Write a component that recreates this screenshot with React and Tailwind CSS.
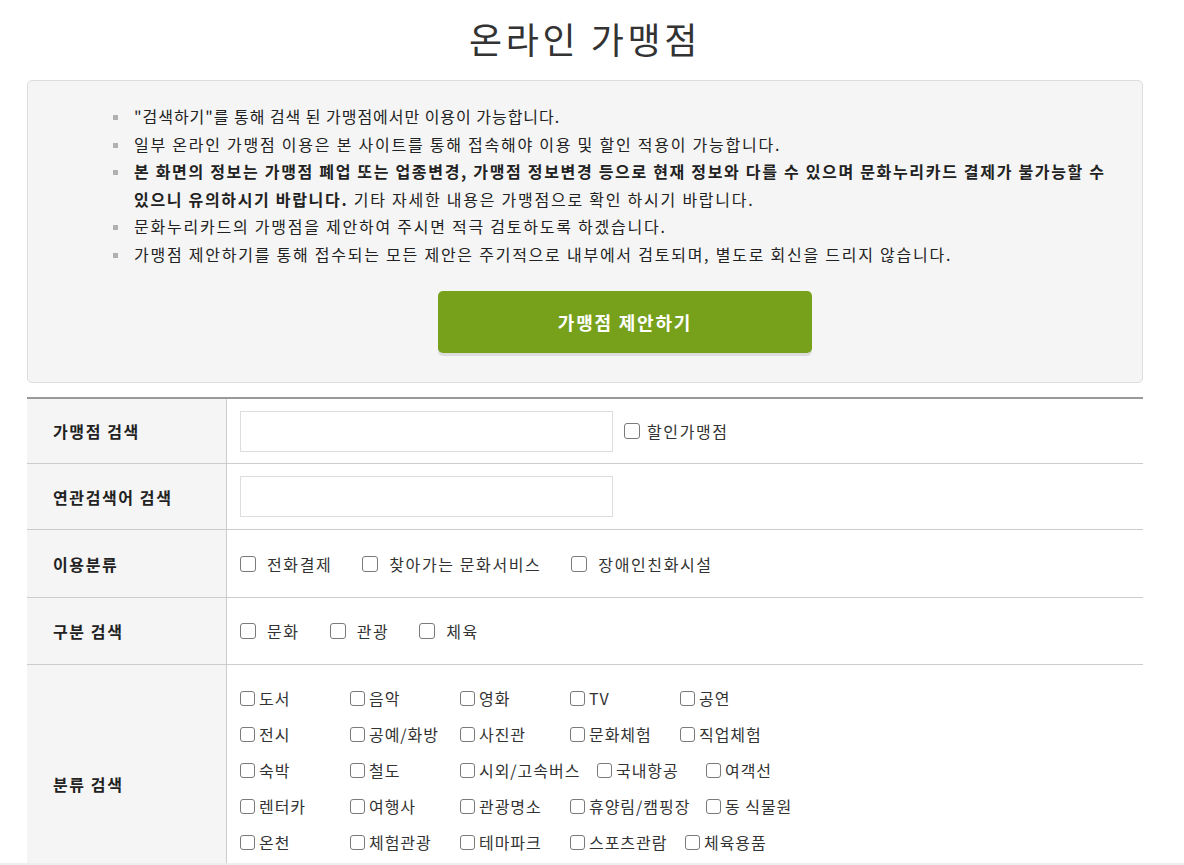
import React from 'react';

const FONT = { fontFamily: '"Noto Sans CJK KR", "Noto Sans", sans-serif' };

const NOTICES = [
  { text: '"검색하기"를 통해 검색 된 가맹점에서만 이용이 가능합니다.', tight: true },
  { text: '일부 온라인 가맹점 이용은 본 사이트를 통해 접속해야 이용 및 할인 적용이 가능합니다.' },
  { bold: true },
  { text: '문화누리카드의 가맹점을 제안하여 주시면 적극 검토하도록 하겠습니다.' },
  { text: '가맹점 제안하기를 통해 접수되는 모든 제안은 주기적으로 내부에서 검토되며, 별도로 회신을 드리지 않습니다.' },
];

const CATEGORY_ROWS = [
  [['도서'], ['음악'], ['영화'], ['TV'], ['공연']],
  [['전시'], ['공예/화방'], ['사진관'], ['문화체험'], ['직업체험']],
  [['숙박'], ['철도'], ['시외/고속버스', 'w-[137px]'], ['국내항공', 'w-[109px]'], ['여객선']],
  [['렌터카'], ['여행사'], ['관광명소'], ['휴양림/캠핑장', 'w-[136px]'], ['동 식물원']],
  [['온천'], ['체험관광'], ['테마파크'], ['스포츠관람', 'w-[115px]'], ['체육용품']],
];

function Box({ big }) {
  return (
    <input
      type="checkbox"
      className={`appearance-none shrink-0 border border-[#7a7a7a] rounded-[3px] bg-white ${
        big ? 'w-[16px] h-[16px]' : 'w-[15px] h-[15px]'
      }`}
    />
  );
}

function Row({ label, height, children, last, labelClass = 'items-center', cellClass = 'items-center' }) {
  return (
    <div className={`flex ${height} ${last ? '' : 'border-b border-[#cccccc]'}`}>
      <div
        className={`w-[200px] shrink-0 bg-[#f5f5f5] border-r border-[#cccccc] flex ${labelClass} pl-[26px] text-[16px] font-bold tracking-[0.1em] text-[#222]`}
      >
        {label}
      </div>
      <div className={`flex-1 pl-[13px] flex ${cellClass}`}>{children}</div>
    </div>
  );
}

export default function App() {
  return (
    <div className="bg-white min-h-[865px] text-[#222]" style={FONT}>
      <div className="w-[1116px] ml-[27px]">
        <h1 className="pt-[11px] mb-[15px] text-center text-[36px] leading-[54px] font-normal tracking-[0.1em] text-[#333]">
          온라인 가맹점
        </h1>

        <div className="border border-[#dddddd] rounded-[5px] bg-[#f5f5f5] pt-[22px] pb-[29px]">
          <ul className="pl-[106px] pr-[10px] text-[16px] leading-[27.5px] text-[#222]">
            {NOTICES.map((n, i) => (
              <li
                key={i}
                className={`relative whitespace-nowrap ${n.tight ? 'tracking-[0.06em]' : 'tracking-[0.11em]'}`}
              >
                <span className="absolute left-[-21px] top-[12px] w-[5px] h-[5px] bg-[#b0b0b0]" />
                {n.bold ? (
                  <>
                    <b className="font-bold tracking-[0.105em]">
                      본 화면의 정보는 가맹점 폐업 또는 업종변경, 가맹점 정보변경 등으로 현재 정보와 다를 수 있으며 문화누리카드 결제가 불가능할 수
                      <br />
                      있으니 유의하시기 바랍니다.
                    </b>{' '}
                    기타 자세한 내용은 가맹점으로 확인 하시기 바랍니다.
                  </>
                ) : (
                  n.text
                )}
              </li>
            ))}
          </ul>
          <div className="flex justify-center pl-[80px] mt-[23px]">
            <button className="w-[374px] h-[62px] rounded-[5px] bg-[#77a11b] text-white text-[18px] font-bold tracking-[0.1em] shadow-[0_3px_0_#dcdcdc]">
              가맹점 제안하기
            </button>
          </div>
        </div>

        <div className="mt-[14px] border-t-2 border-[#999999]">
          <Row label="가맹점 검색" height="h-[65px]">
            <input className="w-[373px] h-[41px] border border-[#dddddd] bg-white" />
            <label className="flex items-center ml-[11px] text-[16px] tracking-[0.1em] text-[#333]">
              <Box big />
              <span className="ml-[7px]">할인가맹점</span>
            </label>
          </Row>
          <Row label="연관검색어 검색" height="h-[66px]">
            <input className="w-[373px] h-[41px] border border-[#dddddd] bg-white" />
          </Row>
          <Row label="이용분류" height="h-[68px]">
            {['전화결제', '찾아가는 문화서비스', '장애인친화시설'].map((t) => (
              <label key={t} className="flex items-center mr-[30px] text-[16px] tracking-[0.1em] text-[#333]">
                <Box big />
                <span className="ml-[11px]">{t}</span>
              </label>
            ))}
          </Row>
          <Row label="구분 검색" height="h-[67px]">
            {['문화', '관광', '체육'].map((t) => (
              <label key={t} className="flex items-center mr-[30px] text-[16px] tracking-[0.1em] text-[#333]">
                <Box big />
                <span className="ml-[11px]">{t}</span>
              </label>
            ))}
          </Row>
          <Row
            label="분류 검색"
            height="h-[198px]"
            last
            labelClass="items-start pt-[107px]"
            cellClass="items-start pt-[15px]"
          >
            <div className="flex flex-col">
              {CATEGORY_ROWS.map((row, i) => (
                <div key={i} className="flex h-[36px] items-center">
                  {row.map(([t, w]) => (
                    <label
                      key={t}
                      className={`flex items-center ${w || 'w-[110px]'} text-[16px] tracking-[0.06em] whitespace-nowrap text-[#333]`}
                    >
                      <Box />
                      <span className="ml-[4px]">{t}</span>
                    </label>
                  ))}
                </div>
              ))}
            </div>
          </Row>
        </div>
      </div>
      <div className="h-[40px] bg-[#eeeeee]" />
    </div>
  );
}
